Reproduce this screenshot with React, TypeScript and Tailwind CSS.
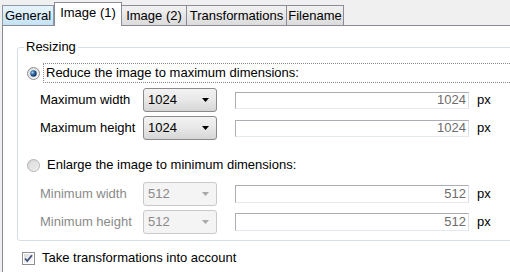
import React from "react";

const font = { fontFamily: '"Liberation Sans", Arial, sans-serif' };

function RadioOn() {
  return (
    <svg width="13" height="13" viewBox="0 0 13 13">
      <defs>
        <linearGradient id="ro" x1="0" y1="0" x2="1" y2="1">
          <stop offset="0" stopColor="#d9d9d9" />
          <stop offset="1" stopColor="#fbfbfb" />
        </linearGradient>
        <radialGradient id="rd" cx="0.35" cy="0.35" r="0.7">
          <stop offset="0" stopColor="#a8d4f5" />
          <stop offset="0.45" stopColor="#2d6ba8" />
          <stop offset="1" stopColor="#0a2b4f" />
        </radialGradient>
      </defs>
      <circle cx="6.5" cy="6.5" r="6" fill="url(#ro)" stroke="#8e8f8f" strokeWidth="1" />
      <circle cx="6.5" cy="6.5" r="3.2" fill="url(#rd)" />
    </svg>
  );
}

function RadioOffDisabled() {
  return (
    <svg width="13" height="13" viewBox="0 0 13 13">
      <defs>
        <linearGradient id="rg" x1="0" y1="0" x2="1" y2="1">
          <stop offset="0" stopColor="#cfcfcf" />
          <stop offset="1" stopColor="#f6f6f6" />
        </linearGradient>
      </defs>
      <circle cx="6.5" cy="6.5" r="6" fill="url(#rg)" stroke="#b4b4b4" strokeWidth="1" />
      <circle cx="6.5" cy="6.5" r="3.5" fill="#e4e4e4" />
    </svg>
  );
}

function CheckOn() {
  return (
    <svg width="13" height="13" viewBox="0 0 13 13">
      <defs>
        <linearGradient id="cb" x1="0" y1="0" x2="1" y2="1">
          <stop offset="0" stopColor="#dcdcdc" />
          <stop offset="1" stopColor="#fbfbfb" />
        </linearGradient>
      </defs>
      <rect x="0.5" y="0.5" width="12" height="12" fill="#ffffff" stroke="#8e8f8f" />
      <rect x="2" y="2" width="9" height="9" fill="url(#cb)" />
      <path d="M3 6.5 L5.3 9 L10 3.3" fill="none" stroke="#3c4d7a" strokeWidth="1.8" />
    </svg>
  );
}

function Arrow({ color }: { color: string }) {
  return (
    <svg width="7" height="4" viewBox="0 0 7 4">
      <path d="M0 0 H7 L3.5 4 Z" fill={color} />
    </svg>
  );
}

function Combo({ value, disabled }: { value: string; disabled?: boolean }) {
  return (
    <div
      className={
        disabled
          ? "w-[74px] h-[24px] rounded-[3px] border border-[#c9c9c9] bg-[#f4f4f4] flex items-center justify-between pl-[4px] pr-[4px] text-[#8a8a8a]"
          : "w-[74px] h-[24px] rounded-[3px] border border-[#8a8a8a] bg-gradient-to-b from-[#f3f3f3] via-[#e8e8e8] to-[#d6d6d6] flex items-center justify-between pl-[4px] pr-[4px] text-black"
      }
    >
      <span>{value}</span>
      <span className="w-[14px] flex justify-center">
        <Arrow color={disabled ? "#a8a8a8" : "#000000"} />
      </span>
    </div>
  );
}

function Field({ value, h }: { value: string; h: string }) {
  return (
    <div
      className={
        "w-[234px] border border-[#abadb3] border-r-[#dbdfe6] border-b-[#e3e9ef] bg-white flex items-center justify-end pr-[2px] text-[#6d6d6d] " +
        h
      }
    >
      {value}
    </div>
  );
}

function Row({
  label,
  value,
  disabled,
  fieldH,
}: {
  label: string;
  value: string;
  disabled?: boolean;
  fieldH: string;
}) {
  return (
    <div className="flex items-center h-[24px] pl-[22px]">
      <div className={"w-[103px] " + (disabled ? "text-[#8a8a8a]" : "text-black")}>{label}</div>
      <Combo value={value} disabled={disabled} />
      <div className="w-[18px]" />
      <Field value={value} h={fieldH} />
      <div className="ml-[8px] text-black">px</div>
    </div>
  );
}

export default function App() {
  return (
    <div
      className="w-[510px] h-[272px] overflow-hidden bg-[#f0f0f0] text-[13px] leading-[14px] flex flex-col"
      style={font}
    >
      <div className="flex items-end h-[25px] pl-[2px]">
        <div className="w-[52px] h-[20px] border border-b-0 border-[#8c9aa8] bg-gradient-to-b from-[#e8f4fc] to-[#c4e2f7] flex items-center justify-center text-black">
          General
        </div>
        <div className="relative z-10 w-[68px] h-[24px] mb-[-1px] border border-b-0 border-[#898c95] bg-white flex items-start pt-[3px] justify-center text-black">
          Image (1)
        </div>
        <div className="w-[65px] h-[20px] border border-b-0 border-l-0 border-[#898c95] bg-gradient-to-b from-[#f2f2f2] to-[#dcdcdc] flex items-center justify-center text-black">
          Image (2)
        </div>
        <div className="w-[100px] h-[20px] border border-b-0 border-l-0 border-[#898c95] bg-gradient-to-b from-[#f2f2f2] to-[#dcdcdc] flex items-center justify-center text-black">
          Transformations
        </div>
        <div className="w-[57px] h-[20px] border border-b-0 border-l-0 border-[#898c95] bg-gradient-to-b from-[#f2f2f2] to-[#dcdcdc] flex items-center justify-center text-black">
          Filename
        </div>
      </div>
      <div className="ml-[2px] flex-1 bg-white border-t border-l border-[#898c95] flex flex-col">
        <fieldset className="ml-[14px] mt-[14px] w-[520px] border border-[#d5dfe5] rounded-[3px] pb-[6px]">
          <legend className="ml-[6px] px-[2px] text-black">Resizing</legend>
          <div className="flex items-center h-[20px] mt-[9px] pl-[9px]">
            <RadioOn />
            <div className="ml-[3px] flex-1 h-[20px] border border-dotted border-[#8a8a8a] flex items-center pl-[2px] text-black">
              Reduce the image to maximum dimensions:
            </div>
          </div>
          <div className="mt-[5px]">
            <Row label="Maximum width" value="1024" fieldH="h-[17px]" />
          </div>
          <div className="mt-[4px]">
            <Row label="Maximum height" value="1024" fieldH="h-[17px]" />
          </div>
          <div className="flex items-center h-[20px] mt-[15px] pl-[9px]">
            <RadioOffDisabled />
            <div className="ml-[7px] text-black">Enlarge the image to minimum dimensions:</div>
          </div>
          <div className="mt-[7px]">
            <Row label="Minimum width" value="512" disabled fieldH="h-[18px]" />
          </div>
          <div className="mt-[4px]">
            <Row label="Minimum height" value="512" disabled fieldH="h-[18px]" />
          </div>
        </fieldset>
        <div className="flex items-center h-[20px] mt-[7px] pl-[19px]">
          <CheckOn />
          <div className="ml-[7px] text-black">Take transformations into account</div>
        </div>
      </div>
    </div>
  );
}
